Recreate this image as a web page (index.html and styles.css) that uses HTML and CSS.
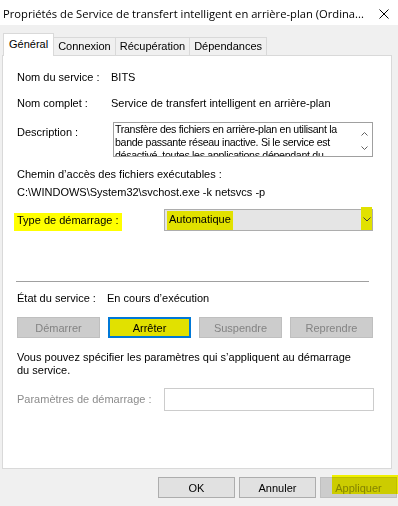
FILE: index.html
```html
<!DOCTYPE html>
<html lang="fr">
<head>
    <meta charset="UTF-8">
    <title>Propriétés de Service de transfert intelligent en arrière-plan</title>
    <link rel="stylesheet" href="styles.css">
</head>
<body>
    <div class="titlebar">
        <span class="title">Propriétés de Service de transfert intelligent en arrière-plan (Ordina...</span>
        <svg class="close" width="10" height="10" viewBox="0 0 10 10"><path d="M0.5 0.5L9.5 9.5M9.5 0.5L0.5 9.5" stroke="#000" stroke-width="1" fill="none"/></svg>
    </div>

    <div class="tabs">
        <div class="tab active">Général</div>
        <div class="tab">Connexion</div>
        <div class="tab">Récupération</div>
        <div class="tab">Dépendances</div>
    </div>

    <div class="panel">
        <div class="info first">
            <span class="label">Nom du service :</span>
            <span>BITS</span>
        </div>
        <div class="info">
            <span class="label">Nom complet :</span>
            <span>Service de transfert intelligent en arrière-plan</span>
        </div>
        <div class="desc-row">
            <span class="label">Description :</span>
            <div class="desc-box">
                <div class="desc-text">Transfère des fichiers en arrière-plan en utilisant la<br>bande passante réseau inactive. Si le service est<br>désactivé, toutes les applications dépendant du<br>service BITS, comme Windows Update ou MSN<br>Explorer, ne pourront pas télécharger<br>automatiquement les programmes ou autres<br>informations.</div>
                <div class="scroll">
                    <svg width="7" height="4" viewBox="0 0 7 4"><path d="M0.5 3.5L3.5 0.5L6.5 3.5" stroke="#606060" fill="none"/></svg>
                    <svg width="7" height="4" viewBox="0 0 7 4"><path d="M0.5 0.5L3.5 3.5L6.5 0.5" stroke="#606060" fill="none"/></svg>
                </div>
            </div>
        </div>
        <div class="path-label">Chemin d’accès des fichiers exécutables :</div>
        <div class="path">C:\WINDOWS\System32\svchost.exe -k netsvcs -p</div>
        <div class="startup">
            <span class="wide-label"><span class="mark">Type de démarrage :</span></span>
            <div class="combo">
                <span class="mark-dim">Automatique</span>
                <span class="chevron">
                    <svg width="8" height="5" viewBox="0 0 8 5"><path d="M0.5 0.5L4 4L7.5 0.5" stroke="#404040" fill="none"/></svg>
                </span>
            </div>
        </div>
        <div class="separator"></div>
        <div class="info state">
            <span class="label state-label">État du service :</span>
            <span>En cours d’exécution</span>
        </div>
        <div class="actions">
            <button class="btn disabled">Démarrer</button>
            <button class="btn focused">Arrêter</button>
            <button class="btn disabled">Suspendre</button>
            <button class="btn disabled">Reprendre</button>
        </div>
        <p class="note">Vous pouvez spécifier les paramètres qui s’appliquent au démarrage du service.</p>
        <div class="params">
            <span class="wide-label muted">Paramètres de démarrage :</span>
            <div class="params-input"></div>
        </div>
    </div>

    <div class="footer">
        <button class="btn small">OK</button>
        <button class="btn small">Annuler</button>
        <button class="btn small disabled">Appliquer<span class="marker"></span></button>
    </div>
</body>
</html>
```

FILE: styles.css
```css
body {
    margin: 0;
    width: 398px;
    height: 506px;
    overflow: hidden;
    background-color: #f0f0f0;
    font-family: 'Liberation Sans', Arial, sans-serif;
    font-size: 11px;
    line-height: 13px;
    color: #000;
}
.titlebar {
    height: 25px;
    background: #fff;
    display: flex;
    align-items: center;
    justify-content: space-between;
    padding: 2px 9px 0 3px;
    box-sizing: border-box;
}
.title {
    font-family: 'Open Sans', 'Liberation Sans', sans-serif;
    font-size: 11.2px;
    color: #000;
    white-space: nowrap;
}
.tabs {
    display: flex;
    align-items: flex-end;
    margin-top: 8px;
    padding-left: 3px;
    height: 22px;
}
.tab {
    height: 18px;
    box-sizing: border-box;
    border: 1px solid #d9d9d9;
    border-bottom: none;
    margin-left: -1px;
    padding: 2px 4px 0;
    background: #f0f0f0;
}
.tab.active {
    margin-left: 0;
    height: 23px;
    margin-bottom: -1px;
    padding: 4px 5px 0;
    background: #fff;
    position: relative;
    z-index: 1;
}
.panel {
    margin-left: 2px;
    width: 390px;
    height: 414px;
    box-sizing: border-box;
    border: 1px solid #d9d9d9;
    background: #fff;
    padding-left: 14px;
}
.info {
    display: flex;
    margin-top: 13px;
}
.info.first {
    margin-top: 15px;
}
.label {
    width: 94px;
    flex-shrink: 0;
}
.desc-row {
    display: flex;
    margin-top: 12px;
}
.desc-row .label {
    margin-top: 4px;
}
.desc-box {
    margin-left: 2px;
    width: 260px;
    height: 35px;
    box-sizing: border-box;
    border: 1px solid #a0a0a0;
    display: flex;
    overflow: hidden;
}
.desc-text {
    flex: 1;
    padding-left: 1px;
    font-size: 10.6px;
    letter-spacing: -0.3px;
    line-height: 13px;
    white-space: nowrap;
    overflow: hidden;
}
.scroll {
    width: 16px;
    flex-shrink: 0;
    display: flex;
    flex-direction: column;
    align-items: center;
    justify-content: space-between;
    padding: 9px 0 6px;
    box-sizing: border-box;
}
.path-label {
    margin-top: 11px;
}
.path {
    margin-top: 5px;
}
.startup {
    display: flex;
    align-items: center;
    margin-top: 10px;
    height: 22px;
}
.wide-label {
    width: 147px;
    flex-shrink: 0;
}
.mark {
    background: #ffff00;
    margin-left: -3px;
    padding: 1px 3px 5px;
}
.combo {
    width: 209px;
    height: 22px;
    box-sizing: border-box;
    border: 1px solid #adadad;
    background: #e5e5e5;
    display: flex;
    align-items: center;
    justify-content: space-between;
    padding-left: 2px;
}
.mark-dim {
    background: #e1e100;
    padding: 2px 2px 4px;
}
.chevron {
    width: 11px;
    height: 23px;
    margin-top: -3px;
    background: #e1e100;
    display: flex;
    align-items: center;
    justify-content: center;
    padding-top: 2px;
    box-sizing: border-box;
}
.separator {
    margin-top: 50px;
    margin-left: -1px;
    width: 353px;
    height: 1px;
    background: #a0a0a0;
}
.info.state {
    margin-top: 10px;
}
.state-label {
    width: 90px;
}
.actions {
    display: flex;
    gap: 8px;
    margin-top: 12px;
}
.btn {
    width: 83px;
    height: 21px;
    box-sizing: border-box;
    border: 1px solid #adadad;
    background: #e1e1e1;
    font-family: 'Liberation Sans', Arial, sans-serif;
    font-size: 11px;
    color: #000;
    padding: 0;
    position: relative;
}
.btn.disabled {
    background: #cccccc;
    border-color: #bfbfbf;
    color: #838383;
}
.btn.focused {
    border: 2px solid #0078d7;
    background: #e1e100;
}
.note {
    margin: 13px 0 0;
    width: 335px;
}
.params {
    display: flex;
    align-items: center;
    margin-top: 11px;
    height: 23px;
}
.muted {
    color: #8c8c8c;
}
.params-input {
    width: 210px;
    height: 23px;
    box-sizing: border-box;
    border: 1px solid #cccccc;
    background: #fff;
}
.footer {
    display: flex;
    justify-content: flex-end;
    gap: 4px;
    margin-top: 8px;
    padding-right: 1px;
}
.btn.small {
    width: 77px;
}
.marker {
    position: absolute;
    left: 11px;
    right: -3px;
    top: -3px;
    height: 19px;
    background: #ffff00;
    mix-blend-mode: multiply;
}
```
